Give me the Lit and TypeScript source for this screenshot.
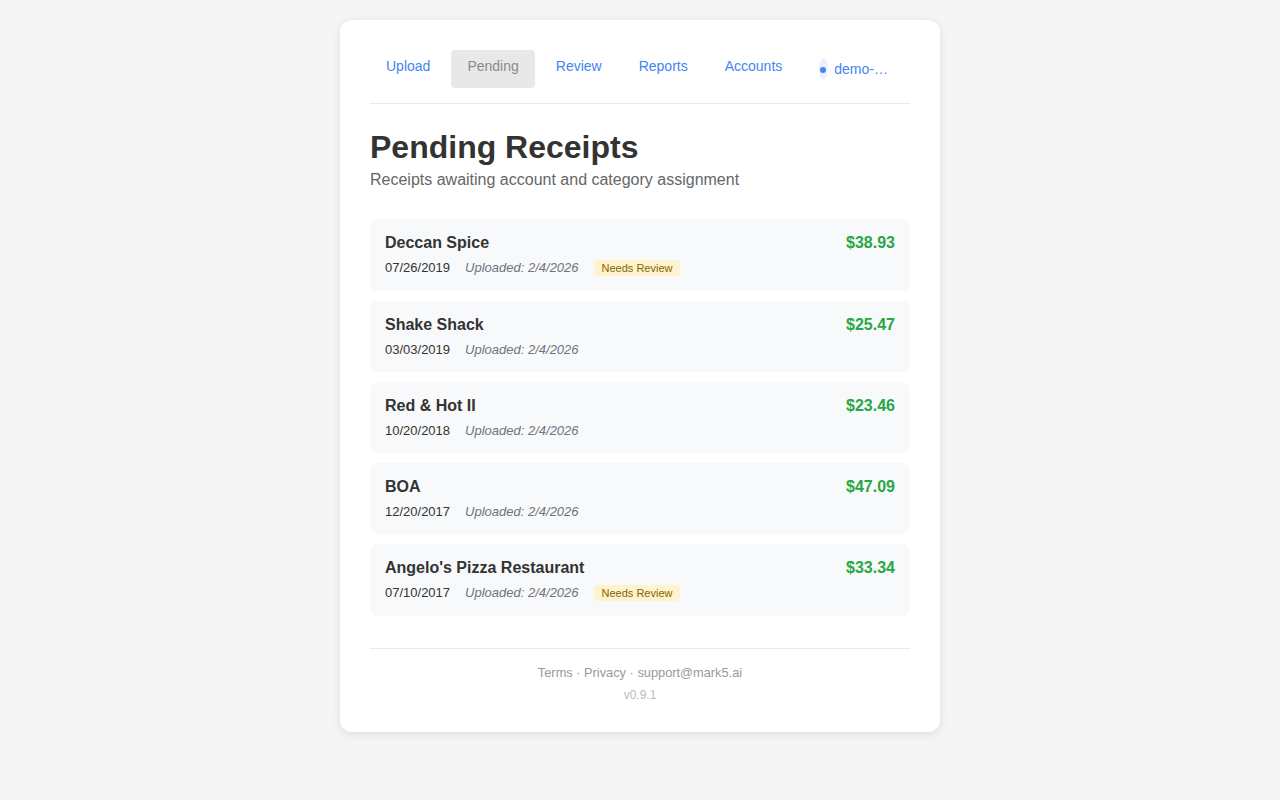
import { LitElement, html, css } from "lit";
import { customElement } from "lit/decorators.js";

const receipts = [
  { name: "Deccan Spice", amount: "$38.93", date: "07/26/2019", review: true },
  { name: "Shake Shack", amount: "$25.47", date: "03/03/2019", review: false },
  { name: "Red & Hot II", amount: "$23.46", date: "10/20/2018", review: false },
  { name: "BOA", amount: "$47.09", date: "12/20/2017", review: false },
  { name: "Angelo's Pizza Restaurant", amount: "$33.34", date: "07/10/2017", review: true },
];

@customElement("app-root")
export class AppRoot extends LitElement {
  static styles = css`
    :host {
      display: block;
      min-height: 800px;
      box-sizing: border-box;
      padding: 20px 0;
      background: #f5f5f5;
      font-family: "Liberation Sans", Arial, sans-serif;
      color: #333;
    }
    .card {
      box-sizing: border-box;
      width: 600px;
      margin: 0 auto;
      padding: 30px 30px 27px;
      background: #fff;
      border-radius: 12px;
      box-shadow: 0 2px 10px rgba(0, 0, 0, 0.1);
    }
    nav {
      display: flex;
      align-items: flex-start;
      gap: 5px;
      padding-bottom: 15px;
      border-bottom: 1px solid #eaeaea;
      margin-bottom: 25px;
    }
    nav a {
      display: block;
      padding: 5px 16px 11px;
      border-radius: 4px;
      font-size: 14px;
      line-height: 22px;
      color: #4285f4;
      white-space: nowrap;
    }
    nav a.active {
      background: #e8e8e8;
      color: #8a8a8a;
    }
    .user {
      display: flex;
      align-items: center;
      width: 69.6px;
      margin: 8px 0 0 15.4px;
      font-size: 14px;
      line-height: 22px;
      color: #4285f4;
    }
    .chip {
      flex: none;
      display: flex;
      align-items: center;
      justify-content: center;
      width: 9px;
      height: 22px;
      margin-right: 6.6px;
      border-radius: 50%;
      background: #ebf2fe;
    }
    .dot {
      width: 6px;
      height: 6px;
      margin-top: 1px;
      border-radius: 50%;
      background: #4285f4;
    }
    .uname {
      overflow: hidden;
      text-overflow: ellipsis;
      white-space: nowrap;
    }
    h1 {
      margin: 0;
      font-size: 32px;
      line-height: 37px;
      font-weight: 700;
      color: #333;
    }
    .sub {
      margin: 0 0 26px;
      padding-top: 1px;
      font-size: 16px;
      line-height: 26px;
      color: #666;
    }
    .list {
      display: flex;
      flex-direction: column;
      gap: 10px;
    }
    .row {
      display: flex;
      justify-content: space-between;
      align-items: flex-start;
      padding: 15px;
      background: #f8f9fa;
      border-radius: 8px;
    }
    .name {
      font-size: 16px;
      line-height: 18px;
      font-weight: 700;
      margin-bottom: 8px;
    }
    .meta {
      display: flex;
      align-items: flex-start;
      gap: 15px;
      font-size: 13px;
      line-height: 15px;
      color: #333;
    }
    .up {
      font-style: italic;
      color: #6c757d;
    }
    .badge {
      padding: 2px 8px;
      border-radius: 4px;
      background: #fff3cd;
      color: #856404;
      font-size: 11px;
      line-height: 12px;
    }
    .amount {
      font-size: 16px;
      line-height: 18px;
      font-weight: 700;
      color: #28a745;
    }
    footer {
      margin-top: 32px;
      padding-top: 14px;
      border-top: 1px solid #eaeaea;
      text-align: center;
      font-size: 12.8px;
      line-height: 20px;
      color: #999;
    }
    .version {
      margin-top: 2px;
      font-size: 12px;
      color: #bbb;
    }
  `;

  render() {
    return html`
      <div class="card">
        <nav>
          <a>Upload</a>
          <a class="active">Pending</a>
          <a>Review</a>
          <a>Reports</a>
          <a>Accounts</a>
          <div class="user">
            <span class="chip"><span class="dot"></span></span>
            <span class="uname">demo-user</span>
          </div>
        </nav>
        <h1>Pending Receipts</h1>
        <p class="sub">Receipts awaiting account and category assignment</p>
        <div class="list">
          ${receipts.map(
            (r) => html`
              <div class="row">
                <div>
                  <div class="name">${r.name}</div>
                  <div class="meta">
                    <span>${r.date}</span>
                    <span class="up">Uploaded: 2/4/2026</span>
                    ${r.review ? html`<span class="badge">Needs Review</span>` : ""}
                  </div>
                </div>
                <div class="amount">${r.amount}</div>
              </div>
            `
          )}
        </div>
        <footer>
          <div>Terms · Privacy · support@mark5.ai</div>
          <div class="version">v0.9.1</div>
        </footer>
      </div>
    `;
  }
}
